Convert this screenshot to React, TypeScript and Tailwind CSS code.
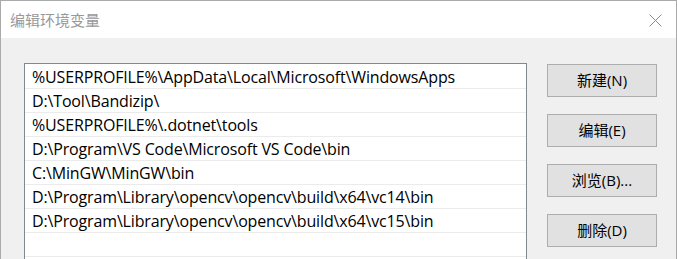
import React from 'react';

const paths = [
  '%USERPROFILE%\\AppData\\Local\\Microsoft\\WindowsApps',
  'D:\\Tool\\Bandizip\\',
  '%USERPROFILE%\\.dotnet\\tools',
  'D:\\Program\\VS Code\\Microsoft VS Code\\bin',
  'C:\\MinGW\\MinGW\\bin',
  'D:\\Program\\Library\\opencv\\opencv\\build\\x64\\vc14\\bin',
  'D:\\Program\\Library\\opencv\\opencv\\build\\x64\\vc15\\bin',
  '',
  '',
];

const buttons = ['新建(N)', '编辑(E)', '浏览(B)...', '删除(D)'];

const font = "font-['Open_Sans','Noto_Sans_CJK_SC',sans-serif]";

export default function App() {
  return (
    <div
      className={`w-[677px] h-[259px] overflow-hidden bg-[#f0f0f0] border-t border-l border-r border-[#aaaaaa] ${font}`}
    >
      {/* title bar */}
      <div className="h-[37px] bg-white flex items-center justify-between pl-[9px] pr-[14px]">
        <span className="text-[15px] text-[#999999] leading-none font-['Noto_Sans_CJK_SC',sans-serif] pb-[1px]">
          编辑环境变量
        </span>
        <svg width="13" height="13" viewBox="0 0 13 13" className="mt-[1px]">
          <path d="M0.5 0.5 L12.5 12.5 M12.5 0.5 L0.5 12.5" stroke="#8a8a8a" strokeWidth="1" fill="none" />
        </svg>
      </div>

      <div className="flex pl-[23px] pt-[25px]">
        {/* path list */}
        <div className="w-[503px] h-[220px] bg-white border border-[#828790] pt-[1px] overflow-hidden">
          {paths.map((p, i) => (
            <div
              key={i}
              className="h-[24px] border-b border-[#ebebeb] pl-[7px] flex items-center text-[16px] text-black whitespace-nowrap tracking-[-0.15px] pt-[1px]"
            >
              {p}
            </div>
          ))}
        </div>

        {/* action buttons */}
        <div className="flex flex-col gap-[17px] ml-[20px] mt-[1px]">
          {buttons.map((b) => (
            <button
              key={b}
              className="w-[110px] h-[33px] bg-[#e1e1e1] border border-[#adadad] text-[15px] text-black flex items-center justify-center"
            >
              {b}
            </button>
          ))}
        </div>
      </div>
    </div>
  );
}
